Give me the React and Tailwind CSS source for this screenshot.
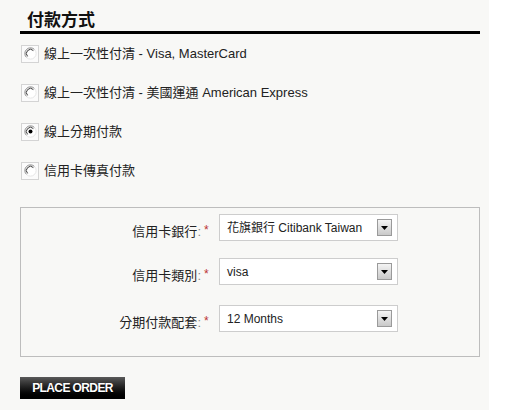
import { useState } from 'react';

const font = { fontFamily: '"Liberation Sans", Arial, "Noto Sans CJK TC", sans-serif' };

const Radio = ({ checked }) => (
  <span className="flex h-[18px] w-[18px] items-center justify-center border border-[#d4d4d4] bg-[#fbfbfb]">
    <svg width="13" height="13" viewBox="0 0 13 13">
      <circle cx="6.5" cy="6.5" r="6" fill="#fff" />
      <path d="M10.5 2.5 A5.6 5.6 0 0 0 2.5 10.5" fill="none" stroke="#8a8a8a" strokeWidth="1" />
      <path d="M9.4 3.6 A4.1 4.1 0 0 0 3.6 9.4" fill="none" stroke="#3a3a3a" strokeWidth="1" />
      <path d="M2.5 10.5 A5.6 5.6 0 0 0 10.5 2.5" fill="none" stroke="#e6e6e6" strokeWidth="1" />
      {checked && <circle cx="6.5" cy="6.5" r="2" fill="#000" />}
    </svg>
  </span>
);

const Select = ({ value }) => (
  <div className="relative flex h-[27px] w-[179px] items-center border border-[#cdcdcd] bg-white pl-[7px] text-[12px] text-[#222]">
    <span>{value}</span>
    <span className="absolute right-[5px] top-[4px] flex h-[17px] w-[15px] items-center justify-center border border-[#9a9a9a] bg-gradient-to-b from-[#f4f4f4] to-[#c9c9c9]">
      <svg width="7" height="4" viewBox="0 0 7 4">
        <path d="M0 0 H7 L3.5 4 Z" fill="#000" />
      </svg>
    </span>
  </div>
);

const FieldRow = ({ label, value, className }) => (
  <div className={'flex items-start ' + className}>
    <span className="w-[180px] pt-[10px] text-right text-[13px] leading-[16px] text-[#222]">
      {label}
      <span className="text-[#888]">:</span>
    </span>
    <span className="ml-[3px] w-[15px] pt-[8px] text-[12px] leading-[16px] text-[#b33]">*</span>
    <Select value={value} />
  </div>
);

const options = [
  '線上一次性付清 - Visa, MasterCard',
  '線上一次性付清 - 美國運通 American Express',
  '線上分期付款',
  '信用卡傳真付款',
];

const App = () => {
  const [selected] = useState(2);

  return (
    <div className="flex min-h-[410px] w-full bg-white" style={font}>
      <div className="w-[489px] bg-[#f8f8f6] pl-5 pr-[9px]">
        <h2 className="pl-[7px] pt-[10px] text-[17px] font-bold leading-[21px] text-[#111]">付款方式</h2>
        <div className="h-[3px] w-[460px] bg-black" />

        <div className="flex flex-col">
          {options.map((opt, i) => (
            <div key={opt} className="flex h-[39px] items-center pl-px">
              <Radio checked={i === selected} />
              <span className="ml-[5px] text-[13px] text-[#222]">{opt}</span>
            </div>
          ))}
        </div>

        <div className="mt-[17px] h-[150px] w-[460px] border border-[#bdbdbd] pt-[6px]">
          <FieldRow label="信用卡銀行" value="花旗銀行 Citibank Taiwan" />
          <FieldRow label="信用卡類別" value="visa" className="mt-[17px]" />
          <FieldRow label="分期付款配套" value="12 Months" className="mt-[20px]" />
        </div>

        <button className="mt-[20px] flex h-[22px] w-[105px] items-center justify-center bg-gradient-to-b from-[#5a5a5a] via-[#1c1c1c] to-[#000] text-[12px] font-bold tracking-[-0.6px] text-white [text-shadow:0_1px_0_#000]">
          PLACE ORDER
        </button>
      </div>
    </div>
  );
};

export default App;
